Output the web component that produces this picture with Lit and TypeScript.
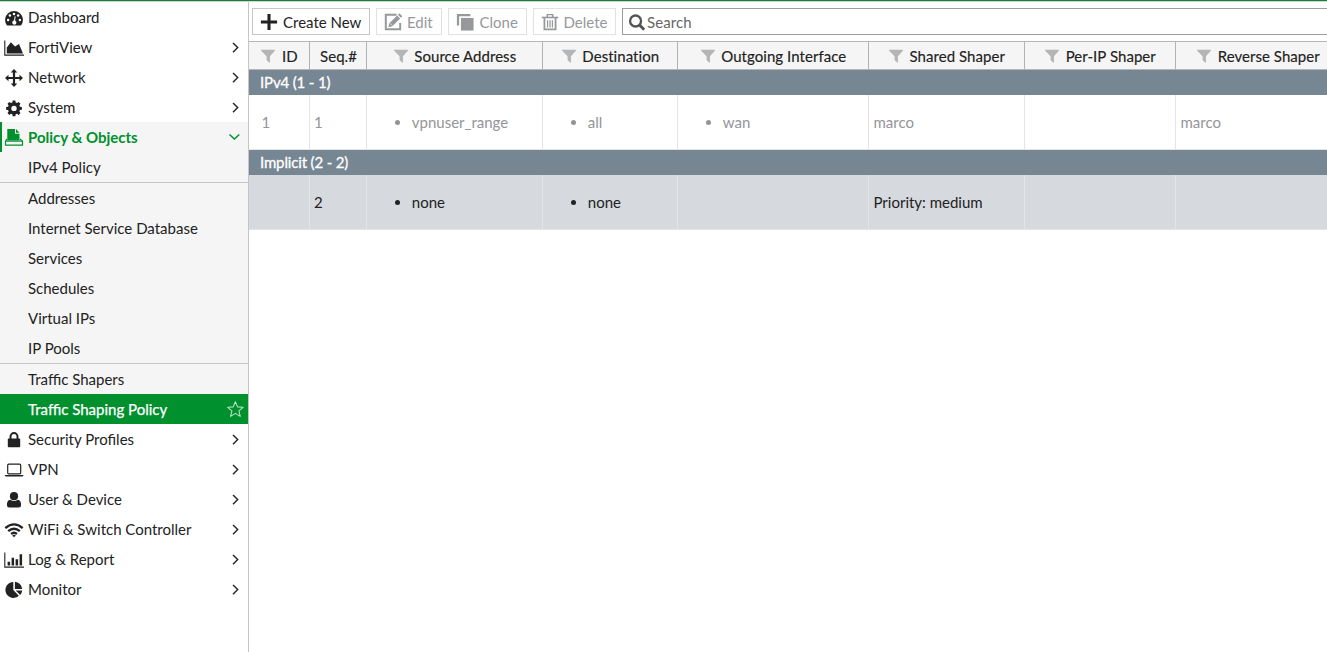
import { LitElement, html, css, svg, nothing } from "lit";
import { customElement, property } from "lit/decorators.js";
import { classMap } from "lit/directives/class-map.js";

const icons: Record<string, unknown> = {
  dashboard: svg`<path fill="currentColor" d="M2.700 16.900A8.900 8.900 0 1 1 17.300 16.900Q16.900 17.500 16.300 17.500H3.700Q3.100 17.500 2.700 16.900z"/>
    <g fill="#fff"><circle cx="10" cy="5.900" r="1.250"/><circle cx="5.900" cy="7.600" r="1.250"/><circle cx="14.100" cy="7.600" r="1.250"/><circle cx="4.100" cy="12" r="1.250"/><circle cx="15.900" cy="12" r="1.250"/><path d="M10.700 8.200l1 .2-.7 4.200a2.100 2.100 0 1 1-1-.1z"/></g>`,
  area: svg`<path d="M.8 2.500V17.100H20" fill="none" stroke="currentColor" stroke-width="1.100"/><path fill="currentColor" d="M2.800 15.500V9.600L6.900 4.300 11 8.500 15 6 19 15.500z"/>`,
  move: svg`<path fill="currentColor" d="M10 1l3.300 3.500h-2.200v4.400h4.400V6.700L19 10l-3.500 3.300v-2.200h-4.400v4.400h2.200L10 19l-3.300-3.500h2.200v-4.400H4.500v2.200L1 10l3.500-3.300v2.200h4.400V4.500H6.700z"/>`,
  gear: svg`<path fill="currentColor" fill-rule="evenodd" d="M8.700 2.500h2.600l.4 2 1.300.5 1.700-1.100 1.800 1.800-1.100 1.700.5 1.300 2 .4v2.600l-2 .4-.5 1.300 1.100 1.700-1.800 1.800-1.700-1.100-1.300.5-.4 2H8.700l-.4-2-1.300-.5-1.700 1.100-1.800-1.800 1.100-1.700-.5-1.300-2-.4V9.100l2-.4.500-1.300-1.100-1.700 1.800-1.800L7 5l1.300-.5zM10 7.700a2.700 2.700 0 1 0 0 5.400 2.700 2.700 0 0 0 0-5.400z"/>`,
  policy: svg`<path fill="currentColor" d="M3.300 1h7.700v4.800h4.500v6.700H3.300zM12 1.100l3.500 3.700H12z"/><path d="M3 10.900L1.500 13.300v3.900h17v-3.900L16 10.900" fill="none" stroke="currentColor" stroke-width="1.200"/><path fill="currentColor" d="M1.500 12.500h17v1.200h-17z"/>`,
  lock: svg`<path fill="currentColor" d="M4.700 8.500h10.600q.9 0 .9.900v6.900q0 .9-.9.900H4.700q-.9 0-.9-.9V9.400q0-.9.900-.9z"/><path d="M6.500 9.500V6.600a3.500 3.500 0 0 1 7 0v2.900" fill="none" stroke="currentColor" stroke-width="2"/>`,
  laptop: svg`<rect x="3.700" y="4.200" width="13" height="9.600" rx="1" fill="none" stroke="currentColor" stroke-width="1.200"/><path fill="currentColor" d="M.8 14.900h18.600v.7q-.2.900-1.400.9H2.200q-1.200 0-1.400-.9z"/>`,
  user: svg`<circle cx="10" cy="6.200" r="4.100" fill="currentColor"/><path fill="currentColor" d="M6.200 9.700q3.800 2.600 7.600 0 3.300.6 3.300 5.200 0 2.500-2.400 2.500H5.300q-2.400 0-2.400-2.500 0-4.600 3.300-5.200z"/>`,
  wifi: svg`<g fill="none" stroke="currentColor" stroke-width="2.300"><path d="M1.300 8.200q8.700-7.600 17.400 0"/><path d="M4.200 11.200q5.800-5 11.600 0"/><path d="M7.100 14q2.900-2.400 5.800 0"/></g><path fill="currentColor" d="M8.200 15.400q1.800-1.200 3.600 0L10 17.200z"/>`,
  bars: svg`<path d="M.8 2.500V17.100H20" fill="none" stroke="currentColor" stroke-width="1.100"/><path fill="currentColor" d="M3.600 11.700h2.500v3.700H3.600zM7.600 7.800h2.500v7.600H7.600zM11.600 9.300h2.500v6.100h-2.500zM15.600 4.300h2.500v11.100h-2.500z"/>`,
  pie: svg`<path fill="currentColor" d="M9.300 2.100V10l5.500 5.700A7.900 7.900 0 1 1 9.300 2.100zM10.900 1.800a7.900 7.900 0 0 1 7.300 7.100h-7.300zM11.700 10.500h6.500a8 8 0 0 1-2 4.500z"/>`,
  right: svg`<path d="M8 5.900l4.700 4.700-4.700 4.700" fill="none" stroke="currentColor" stroke-width="1.400"/>`,
  down: svg`<path d="M4.500 7.400l4.900 4.700 4.900-4.700" fill="none" stroke="currentColor" stroke-width="1.400"/>`,
  star: svg`<path d="M10.400 2.700l2.200 5.200 5.500.4-4.200 3.600 1.300 5.500-4.800-3-4.800 3 1.300-5.500-4.200-3.600 5.500-.4z" fill="none" stroke="#b5e0c2" stroke-width="1.100" stroke-linejoin="round"/>`,
  plus: svg`<path d="M10 1v18M1 10h18" stroke="currentColor" stroke-width="3.400" fill="none"/>`,
  edit: svg`<path d="M14 2H2v16h16v-7" fill="none" stroke="currentColor" stroke-width="2.200"/><path fill="currentColor" d="M14.600 2.800l3.300 3.300-8.600 8.600-4.600 1.200 1.300-4.500zM15.500 1.900l1-1q.6-.5 1.200 0l2.100 2.100q.5.600 0 1.200l-1 1z"/><path d="M7 11.700l2.100 2.100" stroke="#fff" stroke-width=".8"/>`,
  clone: svg`<path fill="currentColor" d="M1 1h15v2.500H3.500V14H1z"/><path fill="currentColor" d="M5.500 5.500H19.500V19.500H5.500z"/>`,
  trash: svg`<g fill="none" stroke="currentColor"><path d="M.8 5h18.400" stroke-width="1.800"/><path d="M7 5V1.800h6V5" stroke-width="1.600"/><path d="M3.800 5v13.300h12.400V5" stroke-width="2"/><path d="M7.300 8v8M10 8v8M12.700 8v8" stroke-width="1.400"/></g>`,
  search: svg`<circle cx="8.400" cy="8.900" r="6.100" fill="none" stroke="currentColor" stroke-width="2.600"/><path d="M12.700 13.200l5.300 5.300" stroke="currentColor" stroke-width="3.200"/>`,
  filter: svg`<path fill="currentColor" d="M.2 1.200h19.600v1.400L12.800 10.200V20L8 16v-5.800L.2 2.600z"/>`,
};

@customElement("ui-icon")
class UiIcon extends LitElement {
  @property() name = "";
  static styles = css`
    :host { display: block; flex: none; width: 20px; height: 20px; }
    .glyph { display: block; width: 100%; height: 100%; }
  `;
  render() {
    return html`<svg class="glyph" viewBox="0 0 20 20">${icons[this.name]}</svg>`;
  }
}

interface MenuEntry { label: string; icon: string; open?: boolean; leaf?: boolean; }

const menu: MenuEntry[] = [
  { label: "Dashboard", icon: "dashboard", leaf: true },
  { label: "FortiView", icon: "area" },
  { label: "Network", icon: "move" },
  { label: "System", icon: "gear" },
  { label: "Policy & Objects", icon: "policy", open: true },
  { label: "Security Profiles", icon: "lock" },
  { label: "VPN", icon: "laptop" },
  { label: "User & Device", icon: "user" },
  { label: "WiFi & Switch Controller", icon: "wifi" },
  { label: "Log & Report", icon: "bars" },
  { label: "Monitor", icon: "pie" },
];

const submenu = [
  ["IPv4 Policy"],
  ["Addresses", "Internet Service Database", "Services", "Schedules", "Virtual IPs", "IP Pools"],
  ["Traffic Shapers", "Traffic Shaping Policy"],
];

@customElement("side-menu")
class SideMenu extends LitElement {
  static styles = css`
    :host { display: block; width: 248px; flex: none; border-right: 1px solid #c3c5c7; }
    .row { display: flex; align-items: center; box-sizing: border-box; height: 30px; padding: 0 3px 0 4px; }
    .pic { padding: 1px 0 0 0.4px; }
    .label { flex: 1; padding-left: 3.6px; white-space: nowrap; }
    .row.open { border-left: 2px solid #00902e; padding: 0 3px 0 2px; background: #f5f5f5; color: #00902e; font-weight: 700; }
    .section { background: #f5f5f5; }
    .section + .section { border-top: 1px solid #c4c6c8; }
    .sub { padding-left: 24px; }
    .sub .label { padding-left: 4px; }
    .current { background: #00902e; color: #fff; -webkit-text-stroke: 0.25px #fff; }
  `;
  render() {
    return html`${menu.map((m) => html`
      <div class=${classMap({ row: true, open: !!m.open })}>
        <ui-icon class="pic" name=${m.icon}></ui-icon>
        <span class="label">${m.label}</span>
        ${m.leaf ? nothing : html`<ui-icon name=${m.open ? "down" : "right"}></ui-icon>`}
      </div>
      ${m.open ? submenu.map((group) => html`<div class="section">${group.map((label) => {
        const current = label === "Traffic Shaping Policy";
        return html`<div class=${classMap({ row: true, sub: true, current })}>
          <span class="label">${label}</span>
          ${current ? html`<ui-icon name="star"></ui-icon>` : nothing}
        </div>`;
      })}</div>`) : nothing}`)}`;
  }
}

@customElement("action-bar")
class ActionBar extends LitElement {
  static styles = css`
    :host { display: flex; gap: 6px; height: 27px; padding: 6px 0 6px 3px; }
    .btn { display: flex; align-items: center; box-sizing: border-box; flex: none; padding-left: 7px; border: 1px solid #e0e1e2; color: #96989a; white-space: nowrap; }
    .create { width: 118px; border-color: #c4c6c8; color: #222; }
    .edit { width: 66px; }
    .clone { width: 79px; }
    .delete { width: 83px; }
    .pic { width: 18px; height: 18px; margin: 1px 5px 0 0; }
    .clone .pic { margin-right: 5.500px; }
    .delete .pic { margin-right: 4.500px; }
    .search { display: flex; align-items: center; box-sizing: border-box; flex: 1; border: 1px solid #9b9d9f; border-right: 0; padding-left: 5px; color: #666; letter-spacing: 0.1px; }
    .find { width: 18px; height: 18px; margin-right: 1px; color: #555; }
  `;
  render() {
    return html`
      <div class="btn create"><ui-icon class="pic" name="plus"></ui-icon>Create New</div>
      <div class="btn edit"><ui-icon class="pic" name="edit"></ui-icon>Edit</div>
      <div class="btn clone"><ui-icon class="pic" name="clone"></ui-icon>Clone</div>
      <div class="btn delete"><ui-icon class="pic" name="trash"></ui-icon>Delete</div>
      <div class="search"><ui-icon class="find" name="search"></ui-icon>Search</div>`;
  }
}

const columns = ["ID", "Seq.#", "Source Address", "Destination", "Outgoing Interface", "Shared Shaper", "Per-IP Shaper", "Reverse Shaper"];

const groups = [
  { title: "IPv4 (1 - 1)", cells: ["1", "1", "vpnuser_range", "all", "wan", "marco", "", "marco"], muted: true },
  { title: "Implicit (2 - 2)", cells: ["", "2", "none", "none", "", "Priority: medium", "", ""], muted: false },
];

@customElement("policy-table")
class PolicyTable extends LitElement {
  static styles = css`
    :host { display: block; overflow: hidden; }
    .grid { display: grid; grid-template-columns: 61px 57px 176px 135px 191px 156px 151px 165px; }
    .head { box-sizing: border-box; height: 29px; border-top: 1px solid #b4b6b8; border-bottom: 1px solid #b4b6b8; background: #f5f5f5; }
    .th { display: flex; align-items: center; justify-content: center; padding: 1px 0 0 1px; border-right: 1px solid #b0b2b4; white-space: nowrap; -webkit-text-stroke: 0.15px #222; }
    .funnel { width: 14px; height: 14px; margin-right: 6.500px; color: #b3b5b7; }
    .name { letter-spacing: 0.05px; }
    .group { height: 25px; line-height: 25px; padding-left: 11px; background: #768692; color: #fff; letter-spacing: -0.15px; -webkit-text-stroke: 0.3px #fff; }
    .body { box-sizing: border-box; height: 55px; background: #d6d9de; border-bottom: 1px solid #e3e4e6; }
    .muted { background: #fff; color: #939597; }
    .td { display: flex; align-items: center; padding-left: 4.500px; border-right: 1px solid #e3e4e6; white-space: nowrap; }
    .td:first-child { padding-left: 12.500px; }
    .td:nth-child(2) { padding-left: 4px; }
    .list { margin: 0; padding-left: 40.300px; }
  `;
  render() {
    return html`
      <div class="grid head">${columns.map((c) => html`<div class="th">${c === "Seq.#" ? nothing : html`<ui-icon class="funnel" name="filter"></ui-icon>`}<span class="name">${c}</span></div>`)}</div>
      ${groups.map((g) => html`
        <div class="group">${g.title}</div>
        <div class=${classMap({ grid: true, body: true, muted: g.muted })}>
          ${g.cells.map((c, i) => html`<div class="td">${c && i > 1 && i < 5 ? html`<ul class="list"><li>${c}</li></ul>` : c}</div>`)}
        </div>`)}`;
  }
}

@customElement("app-root")
class AppRoot extends LitElement {
  static styles = css`
    :host { display: flex; flex-direction: column; height: 100vh; overflow: hidden; background: #fff; color: #222; font: 15px/20px Lato, sans-serif; }
    .accent { flex: none; height: 1px; background: #1f7a3c; border-bottom: 1px solid #c4ddcb; }
    .layout { display: flex; flex: 1; min-height: 0; }
    .main { flex: 1; min-width: 0; }
  `;
  render() {
    return html`
      <div class="accent"></div>
      <div class="layout">
        <side-menu></side-menu>
        <div class="main">
          <action-bar></action-bar>
          <policy-table></policy-table>
        </div>
      </div>`;
  }
}
